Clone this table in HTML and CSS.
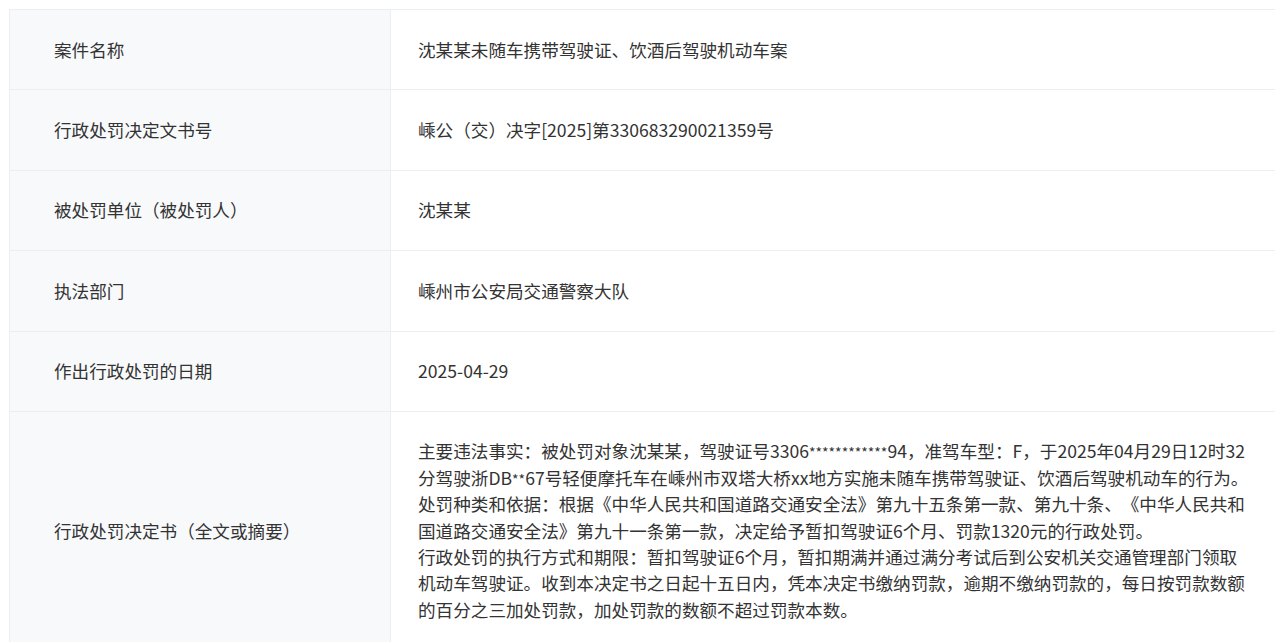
FILE: index.html
```html
<!DOCTYPE html>
<html lang="zh-CN">
<head>
  <meta charset="UTF-8" />
  <title>行政处罚信息</title>
  <link rel="stylesheet" href="styles.css">
</head>
<body>

<table class="detail">
  <colgroup>
    <col class="col-label">
    <col>
  </colgroup>
  <tr>
    <th>案件名称</th>
    <td>沈某某未随车携带驾驶证、饮酒后驾驶机动车案</td>
  </tr>
  <tr>
    <th>行政处罚决定文书号</th>
    <td>嵊公（交）决字[2025]第330683290021359号</td>
  </tr>
  <tr>
    <th>被处罚单位（被处罚人）</th>
    <td>沈某某</td>
  </tr>
  <tr>
    <th>执法部门</th>
    <td>嵊州市公安局交通警察大队</td>
  </tr>
  <tr>
    <th>作出行政处罚的日期</th>
    <td>2025-04-29</td>
  </tr>
  <tr>
    <th>行政处罚决定书（全文或摘要）</th>
    <td>
      <p>主要违法事实：被处罚对象沈某某，驾驶证号3306<span class="masked">************</span>94，准驾车型：F，于2025年04月29日12时32分驾驶浙DB<span class="masked">**</span>67号轻便摩托车在嵊州市双塔大桥xx地方实施未随车携带驾驶证、饮酒后驾驶机动车的行为。</p>
      <p>处罚种类和依据：根据《中华人民共和国道路交通安全法》第九十五条第一款、第九十条、《中华人民共和国道路交通安全法》第九十一条第一款，决定给予暂扣驾驶证6个月、罚款1320元的行政处罚。</p>
      <p>行政处罚的执行方式和期限：暂扣驾驶证6个月，暂扣期满并通过满分考试后到公安机关交通管理部门领取机动车驾驶证。收到本决定书之日起十五日内，凭本决定书缴纳罚款，逾期不缴纳罚款的，每日按罚款数额的百分之三加处罚款，加处罚款的数额不超过罚款本数。</p>
    </td>
  </tr>
</table>

</body>
</html>
```

FILE: styles.css
```css
html {
  overflow: hidden;
}

body {
  margin: 0;
  padding: 9px 0 0 9px;
  font-family: "Microsoft YaHei", "Noto Sans CJK SC", sans-serif;
  font-size: 17.6px;
  line-height: 1.5;
  color: #333;
  background: #fff;
  text-spacing-trim: space-all;
}

.detail {
  width: 1268px;
  border-collapse: collapse;
  table-layout: fixed;
}

.col-label {
  width: 381px;
}

.detail th,
.detail td {
  border: 1px solid #ebeef5;
  text-align: left;
  vertical-align: middle;
  font-weight: normal;
}

.detail th {
  background: #f8f9fb;
  padding: 26.5px 20px 26.5px 44px;
}

.detail td {
  padding: 26.5px 27px;
}

.detail p {
  margin: 0;
}

.masked {
  font-size: 14px;
}
```
